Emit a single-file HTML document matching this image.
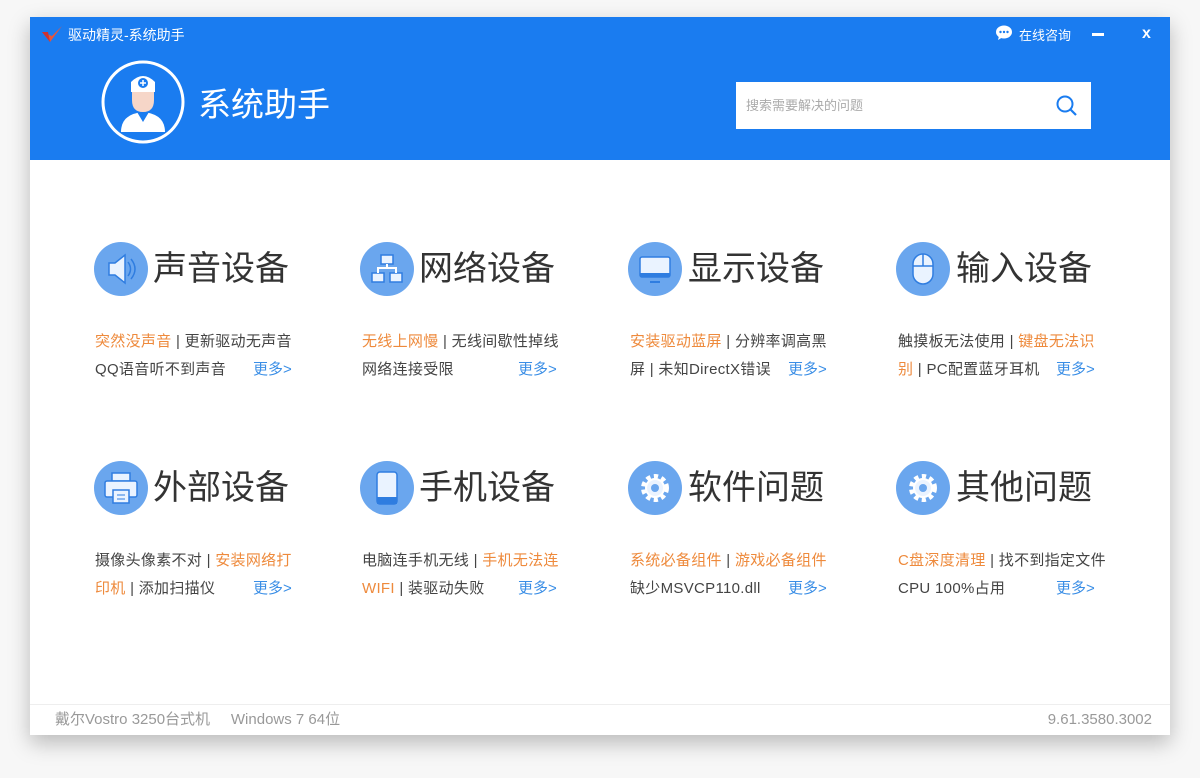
<!DOCTYPE html>
<html><head><meta charset="utf-8"><style>
*{margin:0;padding:0;box-sizing:border-box}
body{width:1200px;height:778px;background:#f7f7f7;font-family:"Liberation Sans","Noto Sans CJK SC",sans-serif;position:relative;overflow:hidden}
.win{position:absolute;left:30px;top:17px;width:1140px;height:718px;background:#fff;box-shadow:0 8px 20px rgba(0,0,0,.25)}
.hdr{position:absolute;left:0;top:0;width:1140px;height:143px;background:#1a7cf0}
.abs{position:absolute}
.t{color:#fff;font-size:14px}
.ic{position:absolute;width:54px;height:54px;border-radius:50%;background:#6aa6ee}
.ti{position:absolute;font-size:34px;color:#333;line-height:40px}
.lk{position:absolute;font-size:15px;letter-spacing:0.3px;color:#444;line-height:28px;width:230px;white-space:nowrap}
.o{color:#ee8a3c}.m{color:#3a8ee6;position:absolute;letter-spacing:0}
.ft{position:absolute;top:687px;left:0;width:1140px;border-top:1px solid #eee;height:31px;font-size:15px;color:#999;line-height:30px}
</style></head><body>
<div class="win">
<div class="hdr">
<svg class="abs" style="left:10px;top:7px" width="24" height="20" viewBox="0 0 24 20"><path d="M2 8 L10 18 L22 2 L12 12 Z" fill="#e8553a"/><path d="M2 8 L10 18 L8 8Z" fill="#c33"/></svg>
<div class="abs t" style="left:38px;top:8px;font-size:14px">驱动精灵-系统助手</div>
<svg class="abs" style="left:965px;top:8px" width="18" height="16" viewBox="0 0 18 16"><ellipse cx="9" cy="7" rx="8" ry="6.5" fill="#fff"/><path d="M4 11 L3 15 L8 12Z" fill="#fff"/><circle cx="5.5" cy="7" r="1.2" fill="#1a7cf0"/><circle cx="9" cy="7" r="1.2" fill="#1a7cf0"/><circle cx="12.5" cy="7" r="1.2" fill="#1a7cf0"/></svg>
<div class="abs t" style="left:989px;top:8px;font-size:13px">在线咨询</div>
<div class="abs" style="left:1062px;top:16px;width:12px;height:3px;background:#fff"></div>
<div class="abs t" style="left:1112px;top:8px;font-size:16px;font-weight:bold">x</div>
<svg class="abs" style="left:71px;top:43px" width="84" height="84" viewBox="0 0 84 84">
<circle cx="42" cy="42" r="40" fill="none" stroke="#fff" stroke-width="3"/>
<path d="M30 22 Q42 10 54 22 L54 32 L30 32Z" fill="#fff"/>
<circle cx="42" cy="23" r="5" fill="#1a7cf0"/><path d="M42 20v6M39 23h6" stroke="#fff" stroke-width="1.5"/>
<path d="M31 32 h22 v8 q0 12 -11 12 q-11 0 -11 -12z" fill="#f6d6c8"/>
<path d="M20 72 q0 -18 22 -20 q22 2 22 20z" fill="#fff"/>
<path d="M36 52 L42 62 L48 52z" fill="#1a7cf0"/>
</svg>
<div class="abs t" style="left:168px;top:61px;font-size:33px">系统助手</div>
<div class="abs" style="left:706px;top:65px;width:355px;height:47px;background:#fff"></div>
<div class="abs" style="left:716px;top:78px;font-size:13px;color:#aaa">搜索需要解决的问题</div>
<svg class="abs" style="left:1025px;top:77px" width="24" height="24" viewBox="0 0 24 24"><circle cx="10" cy="10" r="7.5" fill="none" stroke="#1a7cf0" stroke-width="2"/><path d="M15.5 15.5 L21 21" stroke="#1a7cf0" stroke-width="2.2"/></svg>
</div>

<div class="ic" style="left:64px;top:225px"><svg width="54" height="54" viewBox="0 0 54 54"><path d="M15 21h6l10-8v28l-10-8h-6z" fill="#eaf3ff" stroke="#2f7de0" stroke-width="1.5"/><path d="M34 20q5 7 0 14M37 17q8 10 0 20" fill="none" stroke="#2f7de0" stroke-width="1.5"/></svg></div>
<div class="ti" style="left:123px;top:232px">声音设备</div>
<div class="lk" style="left:65px;top:311px"><span class="o">突然没声音</span> | 更新驱动无声音<br>QQ语音听不到声音<span class="m" style="left:158px">更多&gt;</span></div>

<div class="ic" style="left:330px;top:225px"><svg width="54" height="54" viewBox="0 0 54 54"><g fill="#eaf3ff" stroke="#2f7de0" stroke-width="1.5"><rect x="21" y="13" width="12" height="9"/><rect x="12" y="31" width="12" height="9"/><rect x="30" y="31" width="12" height="9"/></g><path d="M27 22v4M18 31v-5h18v5" fill="none" stroke="#fff" stroke-width="2"/></svg></div>
<div class="ti" style="left:389px;top:232px">网络设备</div>
<div class="lk" style="left:332px;top:311px"><span class="o">无线上网慢</span> | 无线间歇性掉线<br>网络连接受限<span class="m" style="left:156px">更多&gt;</span></div>

<div class="ic" style="left:598px;top:225px"><svg width="54" height="54" viewBox="0 0 54 54"><rect x="12" y="15" width="30" height="20" rx="2" fill="#eaf3ff" stroke="#2f7de0" stroke-width="1.5"/><rect x="12" y="31" width="30" height="4" fill="#2f7de0"/><path d="M22 40h10" stroke="#2f7de0" stroke-width="2"/></svg></div>
<div class="ti" style="left:658px;top:232px">显示设备</div>
<div class="lk" style="left:600px;top:311px"><span class="o">安装驱动蓝屏</span> | 分辨率调高黑<br>屏 | 未知DirectX错误<span class="m" style="left:158px">更多&gt;</span></div>

<div class="ic" style="left:866px;top:225px"><svg width="54" height="54" viewBox="0 0 54 54"><rect x="17" y="12" width="20" height="30" rx="10" fill="#eaf3ff" stroke="#2f7de0" stroke-width="1.5"/><path d="M17 24h20M27 12v12" stroke="#2f7de0" stroke-width="1.5"/></svg></div>
<div class="ti" style="left:926px;top:232px">输入设备</div>
<div class="lk" style="left:868px;top:311px">触摸板无法使用 | <span class="o">键盘无法识</span><br><span class="o">别</span> | PC配置蓝牙耳机<span class="m" style="left:158px">更多&gt;</span></div>

<div class="ic" style="left:64px;top:444px"><svg width="54" height="54" viewBox="0 0 54 54"><rect x="18" y="12" width="18" height="8" fill="#eaf3ff" stroke="#2f7de0" stroke-width="1.5"/><rect x="11" y="20" width="32" height="16" rx="2" fill="#eaf3ff" stroke="#2f7de0" stroke-width="1.5"/><rect x="19" y="29" width="16" height="13" fill="#eaf3ff" stroke="#2f7de0" stroke-width="1.5"/><path d="M23 34h8M23 38h8" stroke="#2f7de0"/></svg></div>
<div class="ti" style="left:123px;top:451px">外部设备</div>
<div class="lk" style="left:65px;top:530px">摄像头像素不对 | <span class="o">安装网络打</span><br><span class="o">印机</span> | 添加扫描仪<span class="m" style="left:158px">更多&gt;</span></div>

<div class="ic" style="left:330px;top:444px"><svg width="54" height="54" viewBox="0 0 54 54"><rect x="17" y="11" width="20" height="32" rx="3" fill="#eaf3ff" stroke="#2f7de0" stroke-width="1.5"/><rect x="17" y="36" width="20" height="7" fill="#2f7de0"/></svg></div>
<div class="ti" style="left:389px;top:451px">手机设备</div>
<div class="lk" style="left:332px;top:530px">电脑连手机无线 | <span class="o">手机无法连</span><br><span class="o">WIFI</span> | 装驱动失败<span class="m" style="left:156px">更多&gt;</span></div>

<div class="ic" style="left:598px;top:444px"><svg width="54" height="54" viewBox="0 0 54 54"><circle cx="27" cy="27" r="11" fill="none" stroke="#fff" stroke-width="6" stroke-dasharray="4 3.2"/><circle cx="27" cy="27" r="9" fill="#eaf3ff" stroke="#fff" stroke-width="2"/><circle cx="27" cy="27" r="4" fill="#6aa6ee"/></svg></div>
<div class="ti" style="left:658px;top:451px">软件问题</div>
<div class="lk" style="left:600px;top:530px"><span class="o">系统必备组件</span> | <span class="o">游戏必备组件</span><br>缺少MSVCP110.dll<span class="m" style="left:158px">更多&gt;</span></div>

<div class="ic" style="left:866px;top:444px"><svg width="54" height="54" viewBox="0 0 54 54"><circle cx="27" cy="27" r="11" fill="none" stroke="#fff" stroke-width="6" stroke-dasharray="4 3.2"/><circle cx="27" cy="27" r="9" fill="#eaf3ff" stroke="#fff" stroke-width="2"/><circle cx="27" cy="27" r="4" fill="#6aa6ee"/></svg></div>
<div class="ti" style="left:926px;top:451px">其他问题</div>
<div class="lk" style="left:868px;top:530px"><span class="o">C盘深度清理</span> | 找不到指定文件<br>CPU 100%占用<span class="m" style="left:158px">更多&gt;</span></div>

<div class="ft"><span class="abs" style="left:25px">戴尔Vostro 3250台式机&nbsp;&nbsp;&nbsp;&nbsp;&nbsp;Windows 7 64位</span><span class="abs" style="right:18px">9.61.3580.3002</span></div>
</div>
</body></html>
